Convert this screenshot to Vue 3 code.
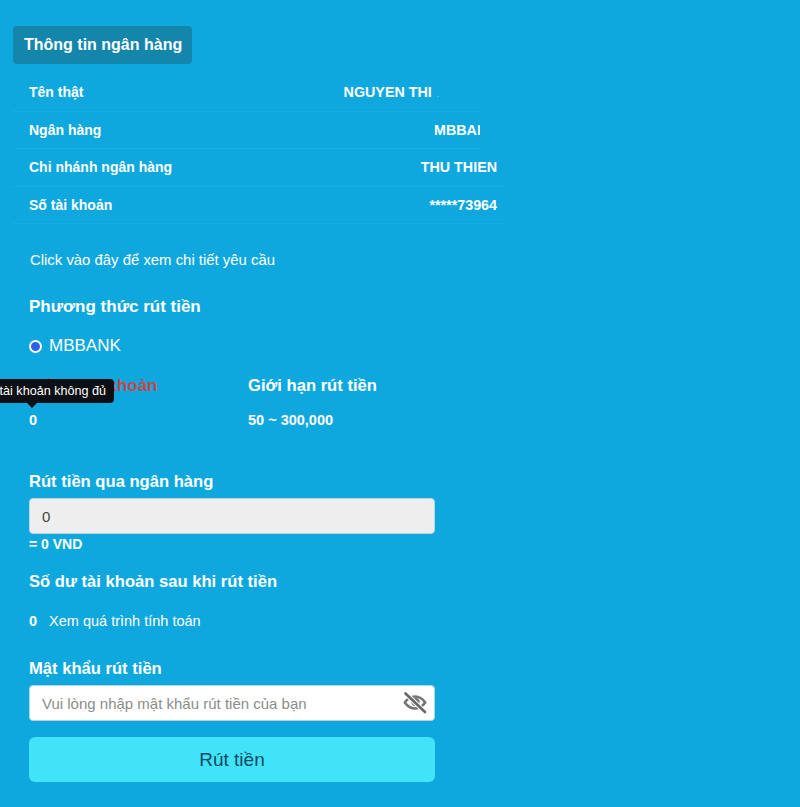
<script setup>
const rows = [
  { label: 'Tên thật', value: 'NGUYEN THI', tail: '.', kind: 'name' },
  { label: 'Ngân hàng', value: 'MBBANK', kind: 'bank' },
  { label: 'Chi nhánh ngân hàng', value: 'THU THIEN', kind: 'wide' },
  { label: 'Số tài khoản', value: '*****73964', kind: 'wide' }
]
</script>

<template>
  <main class="page">
    <h1 class="title">Thông tin ngân hàng</h1>
    <section class="table">
      <div v-for="row in rows" :key="row.label" class="row" :class="row.kind">
        <span class="label">{{ row.label }}</span>
        <span class="value"><span class="clip">{{ row.value }}</span><i v-if="row.tail" class="tail">{{ row.tail }}</i></span>
      </div>
    </section>

    <p class="detail">Click vào đây để xem chi tiết yêu cầu</p>

    <h2 class="heading method">Phương thức rút tiền</h2>
    <label class="radio"><span class="dot"></span>MBBANK</label>

    <section class="stats">
      <div class="stat balance">
        <h2 class="heading danger">Số dư tài khoản</h2>
        <div class="tooltip">Số dư tài khoản không đủ</div>
        <p class="num">0</p>
      </div>
      <div class="stat">
        <h2 class="heading">Giới hạn rút tiền</h2>
        <p class="num">50 ~ 300,000</p>
      </div>
    </section>

    <h2 class="heading via">Rút tiền qua ngân hàng</h2>
    <input class="field disabled" value="0" disabled />
    <p class="vnd">= 0 VND</p>

    <h2 class="heading after">Số dư tài khoản sau khi rút tiền</h2>
    <p class="calc"><b>0</b><span>Xem quá trình tính toán</span></p>

    <h2 class="heading pass">Mật khẩu rút tiền</h2>
    <div class="pass-wrap">
      <input class="field" placeholder="Vui lòng nhập mật khẩu rút tiền của bạn" />
      <svg class="eye" viewBox="0 0 24 24" width="24" height="24" fill="none" stroke-linecap="round" stroke-linejoin="round">
        <path d="M1.8 11.5C4.5 7.6 8 5.5 12 5.5s7.5 2.1 10.2 6c-2.7 3.9-6.2 6-10.2 6s-7.5-2.1-10.2-6Z" stroke="#757575" stroke-width="2.6" />
        <circle cx="12.5" cy="11" r="4.2" fill="#757575" />
        <path d="M2.5 2.5 22 21" stroke="#fff" stroke-width="4.6" />
        <path d="M2.5 2.5 22 21" stroke="#666" stroke-width="2.6" />
      </svg>
    </div>
    <button class="submit" type="button">Rút tiền</button>
  </main>
</template>

<style>
html, body { margin: 0; background: #0ea8df; }
</style>

<style scoped>
.page {
  box-sizing: border-box;
  width: 800px;
  height: 807px;
  overflow: hidden;
  padding: 26px 0 0;
  background: #0ea8df;
  color: #fff;
  font-family: "Liberation Sans", Arial, sans-serif;
}
.title {
  box-sizing: border-box;
  width: 179px;
  height: 38px;
  margin: 0 0 10px 13px;
  padding: 0 0 0 11px;
  border-radius: 4px;
  background: #1486ab;
  font-size: 16px;
  font-weight: 700;
  line-height: 37px;
  white-space: nowrap;
}
.table { display: flex; flex-direction: column; margin-left: 12px; }
.row {
  box-sizing: border-box;
  display: flex;
  justify-content: space-between;
  align-items: center;
  height: 37.5px;
  padding: 0 9px 0 17px;
  border-bottom: 1px solid #17ade2;
  font-size: 14px;
  font-weight: 700;
}
.row.name, .row.bank { width: 468px; }
.row.wide { width: 494px; }
.row.name { padding-right: 41px; }
.row.bank { padding-right: 0; }
.value { display: flex; align-items: baseline; font-size: 14.3px; white-space: nowrap; }
.row.bank .clip { display: block; width: 46px; overflow: hidden; }
.tail { margin-left: 5px; font-style: normal; font-weight: 400; font-size: 8px; opacity: .6; }
.detail { margin: 27px 0 0 30px; font-size: 14.9px; line-height: 18px; }
.heading { margin: 0; font-size: 16.6px; font-weight: 700; line-height: 20px; white-space: nowrap; }
.method { margin: 28px 0 0 29px; font-size: 17px; }
.radio { display: flex; align-items: center; margin: 19px 0 0 29px; font-size: 17px; line-height: 20px; }
.dot {
  box-sizing: border-box;
  width: 13px;
  height: 13px;
  margin-right: 7px;
  border: 2.5px solid #fff;
  border-radius: 50%;
  background: #2a62ee;
}
.stats { display: flex; margin: 20px 0 0 29px; }
.stat { position: relative; width: 219px; }
.danger { color: #c8474a; font-size: 17px; }
.num { margin: 15px 0 0; font-size: 14.5px; font-weight: 700; line-height: 18px; }
.tooltip {
  position: absolute;
  top: 3px;
  right: 134px;
  box-sizing: border-box;
  height: 24px;
  padding: 0 8px;
  border-radius: 4px;
  background: #0c0f14;
  font-size: 12.6px;
  line-height: 24px;
  white-space: nowrap;
}
.tooltip::after {
  content: "";
  position: absolute;
  right: 77px;
  bottom: -5px;
  border: 5px solid transparent;
  border-top-color: #0c0f14;
  border-bottom: 0;
}
.via { margin: 43px 0 0 29px; }
.field {
  box-sizing: border-box;
  display: block;
  width: 406px;
  height: 36px;
  padding: 0 12px;
  border: 1px solid #b9d3dd;
  border-radius: 4px;
  outline: 0;
  background: #fff;
  color: #444;
  font-family: inherit;
  font-size: 15px;
  opacity: 1;
}
.field::placeholder { color: #8c8c8c; opacity: 1; }
.field.disabled { margin: 6px 0 0 29px; background: #eeeeee; }
.vnd { margin: 1px 0 0 29px; font-size: 14px; font-weight: 700; line-height: 18px; }
.after { margin: 19px 0 0 29px; }
.calc { display: flex; gap: 12px; margin: 20px 0 0 29px; font-size: 14.5px; line-height: 18px; }
.pass { margin: 29px 0 0 29px; }
.pass-wrap { position: relative; width: 406px; margin: 6px 0 0 29px; }
.eye { position: absolute; top: 6px; right: 8px; }
.submit {
  display: block;
  width: 406px;
  height: 45px;
  margin: 16px 0 0 29px;
  padding: 0;
  border: 0;
  border-radius: 6px;
  background: #40e3f7;
  color: #0c4a66;
  font-family: inherit;
  font-size: 19px;
}
</style>
